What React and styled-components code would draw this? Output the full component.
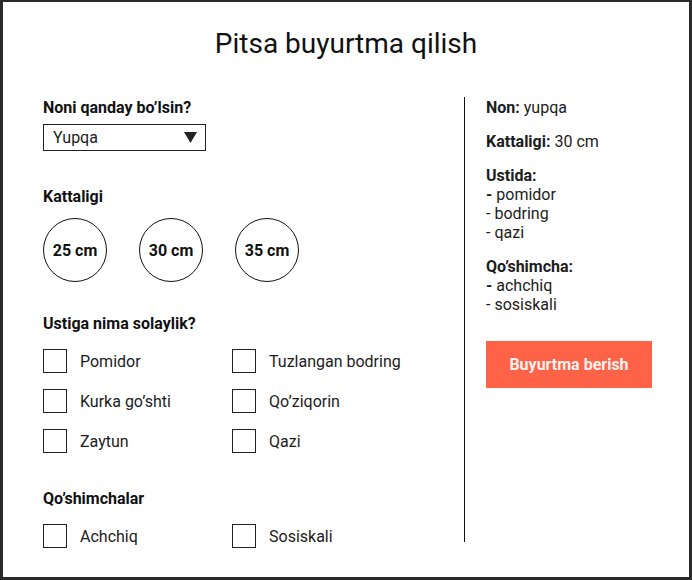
import React from 'react';
import styled, { createGlobalStyle } from 'styled-components';

const GlobalStyle = createGlobalStyle`
  body {
    margin: 0;
    background: #ffffff;
    font-family: Roboto, "Liberation Sans", Arial, sans-serif;
    color: #1c1c1c;
  }
`;

const Frame = styled.div`
  width: 692px;
  height: 580px;
  box-sizing: border-box;
  border-style: solid;
  border-color: #2a2a2a;
  border-width: 2px 3px 3px 3px;
  background: #ffffff;
  display: flex;
  flex-direction: column;
`;

const Title = styled.h1`
  margin: 25px 0 0;
  font-size: 28px;
  line-height: 33px;
  font-weight: 400;
  text-align: center;
  color: #111;
`;

const Body = styled.div`
  display: flex;
  align-items: flex-start;
  margin-top: 37px;
  padding-left: 40px;
`;

const Form = styled.div`
  width: 421px;
  padding-top: 1px;
`;

const Section = styled.section`
  margin-bottom: ${(p) => p.$after || 0}px;
`;

const Heading = styled.h3`
  margin: 0 0 ${(p) => p.$gap || 12}px;
  font-size: 16px;
  line-height: 19px;
  font-weight: 700;
  color: #111;
`;

const Select = styled.div`
  width: 163px;
  height: 27px;
  box-sizing: border-box;
  border: 1px solid #222;
  padding: 0 8px 0 9px;
  display: flex;
  align-items: center;
  justify-content: space-between;
  font-size: 16px;
`;

const Sizes = styled.div`
  display: flex;
  gap: 32px;
`;

const SizeCircle = styled.div`
  width: 64px;
  height: 64px;
  box-sizing: border-box;
  border: 1px solid #111;
  border-radius: 50%;
  display: flex;
  align-items: center;
  justify-content: center;
  font-size: 16px;
  font-weight: 700;
  color: #111;
`;

const Options = styled.div`
  display: grid;
  grid-template-columns: 189px 189px;
  row-gap: 16px;
`;

const Option = styled.label`
  display: flex;
  align-items: center;
  gap: 13px;
  font-size: 16px;
  line-height: 19px;
`;

const Box = styled.span`
  width: 24px;
  height: 24px;
  box-sizing: border-box;
  border: 1px solid #222;
  flex-shrink: 0;
`;

const Summary = styled.aside`
  height: 445px;
  box-sizing: border-box;
  border-left: 1px solid #111;
  padding: 1px 0 0 21px;
`;

const Block = styled.div`
  font-size: 16px;
  line-height: 19px;
  margin-bottom: ${(p) => (p.$last ? 0 : 15)}px;
`;

const OrderButton = styled.button`
  margin-top: 27px;
  width: 166px;
  height: 47px;
  border: none;
  background: #fe6347;
  color: #fff2ee;
  font-family: inherit;
  font-size: 16px;
  font-weight: 700;
  cursor: pointer;
`;

const Arrow = () => (
  <svg width="13" height="11" viewBox="0 0 13 11">
    <path d="M0 0 H13 L6.5 11 Z" fill="#222" />
  </svg>
);

const toppings = ['Pomidor', 'Tuzlangan bodring', 'Kurka go’shti', 'Qo’ziqorin', 'Zaytun', 'Qazi'];
const extras = ['Achchiq', 'Sosiskali'];

export default function App() {
  return (
    <>
      <GlobalStyle />
      <Frame>
        <Title>Pitsa buyurtma qilish</Title>
        <Body>
          <Form>
            <Section $after={36}>
              <Heading $gap={7}>Noni qanday bo’lsin?</Heading>
              <Select>
                <span>Yupqa</span>
                <Arrow />
              </Select>
            </Section>

            <Section $after={32}>
              <Heading $gap={12}>Kattaligi</Heading>
              <Sizes>
                {['25 cm', '30 cm', '35 cm'].map((s) => (
                  <SizeCircle key={s}>{s}</SizeCircle>
                ))}
              </Sizes>
            </Section>

            <Section $after={36}>
              <Heading $gap={16}>Ustiga nima solaylik?</Heading>
              <Options>
                {toppings.map((t) => (
                  <Option key={t}>
                    <Box />
                    {t}
                  </Option>
                ))}
              </Options>
            </Section>

            <Section>
              <Heading $gap={16}>Qo’shimchalar</Heading>
              <Options>
                {extras.map((t) => (
                  <Option key={t}>
                    <Box />
                    {t}
                  </Option>
                ))}
              </Options>
            </Section>
          </Form>

          <Summary>
            <Block>
              <b>Non:</b> yupqa
            </Block>
            <Block>
              <b>Kattaligi:</b> 30 cm
            </Block>
            <Block>
              <b>Ustida:</b>
              <br />
              <b>-</b> pomidor
              <br />- bodring
              <br />- qazi
            </Block>
            <Block $last>
              <b>Qo’shimcha:</b>
              <br />
              <b>-</b> achchiq
              <br />- sosiskali
            </Block>
            <OrderButton>Buyurtma berish</OrderButton>
          </Summary>
        </Body>
      </Frame>
    </>
  );
}
